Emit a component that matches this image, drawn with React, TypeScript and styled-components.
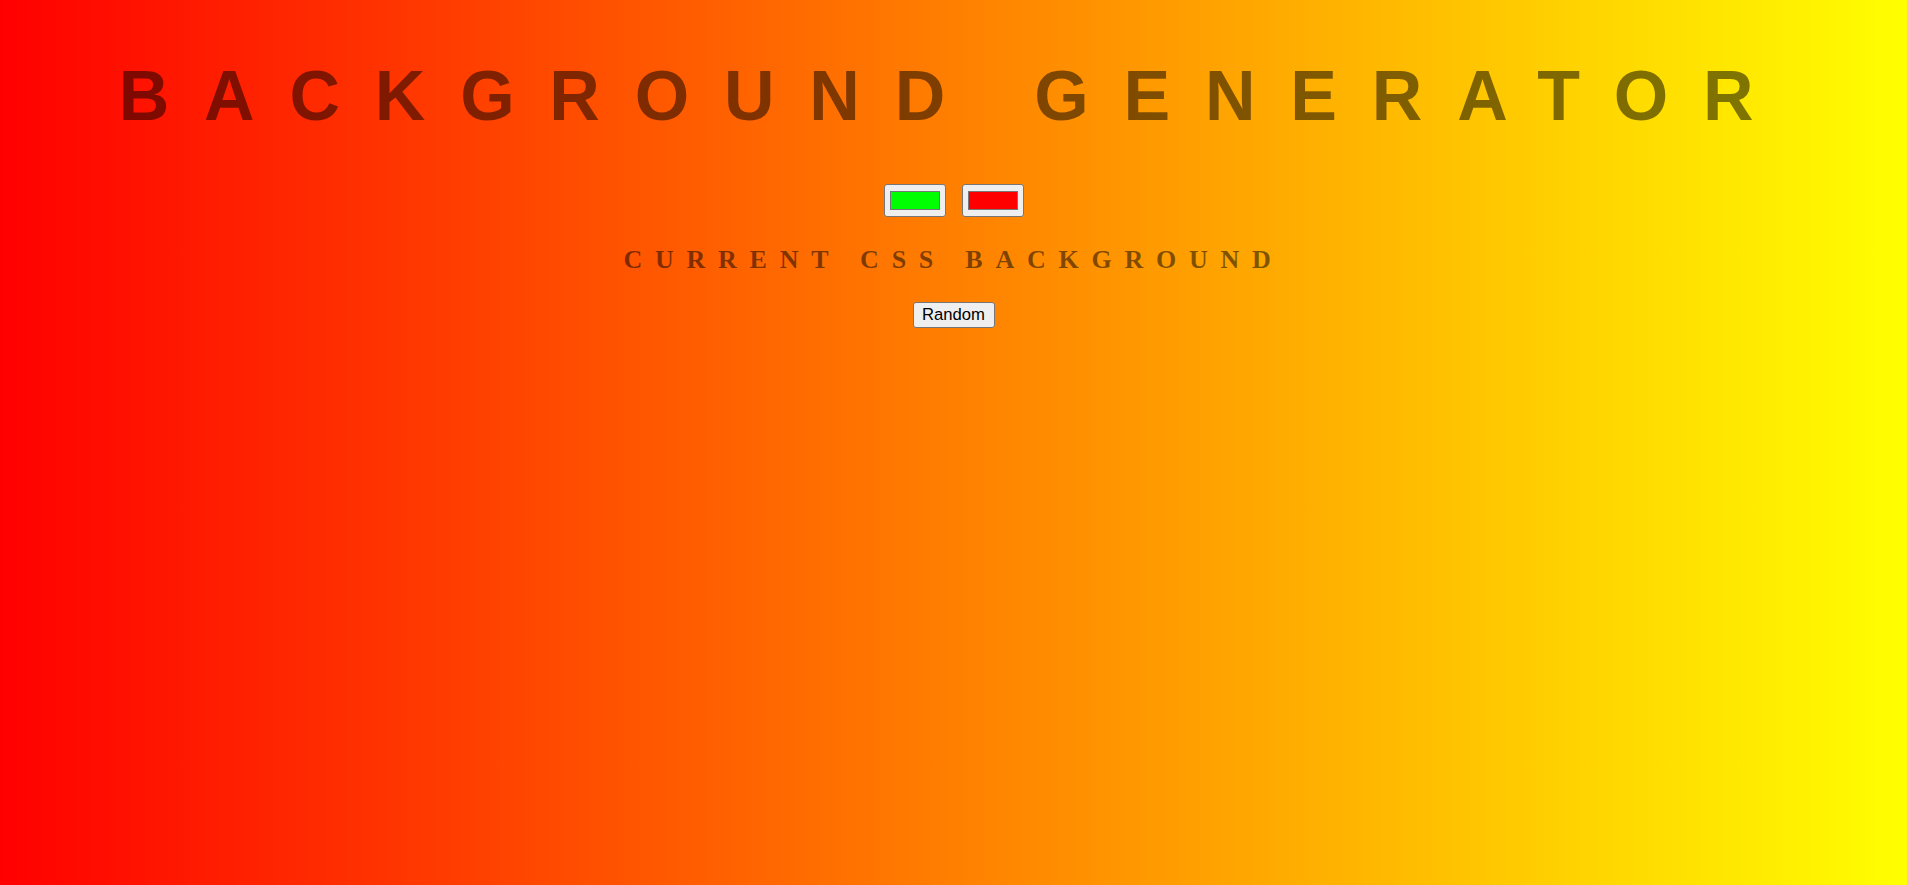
import React from "react";
import styled, { createGlobalStyle } from "styled-components";

const GlobalStyle = createGlobalStyle`
  html, body {
    margin: 0;
    padding: 0;
  }
  body {
    font-family: "Liberation Sans", Arial, sans-serif;
  }
`;

const Page = styled.div`
  min-height: 100vh;
  box-sizing: border-box;
  background: linear-gradient(to right, red, yellow);
  color: rgba(0, 0, 0, 0.5);
  text-align: center;
  text-transform: uppercase;
  display: flex;
  flex-direction: column;
  align-items: center;
  padding: 0 10px;
`;

const Title = styled.h1`
  margin: 56px 0 0;
  width: 100%;
  font-family: "Liberation Sans", Arial, sans-serif;
  font-weight: 600;
  font-size: 70px;
  line-height: 80px;
  letter-spacing: 34.8px;
  color: rgba(0, 0, 0, 0.5);
`;

const PickerRow = styled.div`
  display: flex;
  justify-content: center;
  gap: 16px;
  margin-top: 48px;
`;

const ColorInput = styled.input.attrs({ type: "color" })`
  width: 62px;
  height: 33px;
  box-sizing: border-box;
  margin: 0;
  padding: 1px 3px;
  border: 1px solid #767676;
  border-radius: 3px;
  background: #efefef;
  cursor: pointer;

  &::-webkit-color-swatch-wrapper {
    padding: 5px 2px;
  }
  &::-webkit-color-swatch {
    border: 1px solid #777777;
    border-radius: 0;
  }
`;

const Subtitle = styled.h3`
  margin: 28px 0 0;
  font-family: "Liberation Serif", "Times New Roman", serif;
  font-weight: 900;
  font-size: 26px;
  line-height: 30px;
  letter-spacing: 12.75px;
  color: rgba(0, 0, 0, 0.5);
`;

const RandomButton = styled.button`
  margin-top: 27px;
  height: 26px;
  width: 82px;
  box-sizing: border-box;
  padding: 0 7px;
  border: 1px solid #767676;
  border-radius: 3px;
  background: #efefef;
  color: #000;
  font-family: "Liberation Sans", Arial, sans-serif;
  font-size: 16.67px;
  line-height: 20px;
  letter-spacing: normal;
  text-transform: none;
  cursor: pointer;
`;

export default function App() {
  return (
    <>
      <GlobalStyle />
      <Page>
        <Title>Background Generator</Title>
        <PickerRow>
          <ColorInput name="color1" defaultValue="#00ff00" />
          <ColorInput name="color2" defaultValue="#ff0000" />
        </PickerRow>
        <Subtitle>Current CSS Background</Subtitle>
        <RandomButton>Random</RandomButton>
      </Page>
    </>
  );
}
